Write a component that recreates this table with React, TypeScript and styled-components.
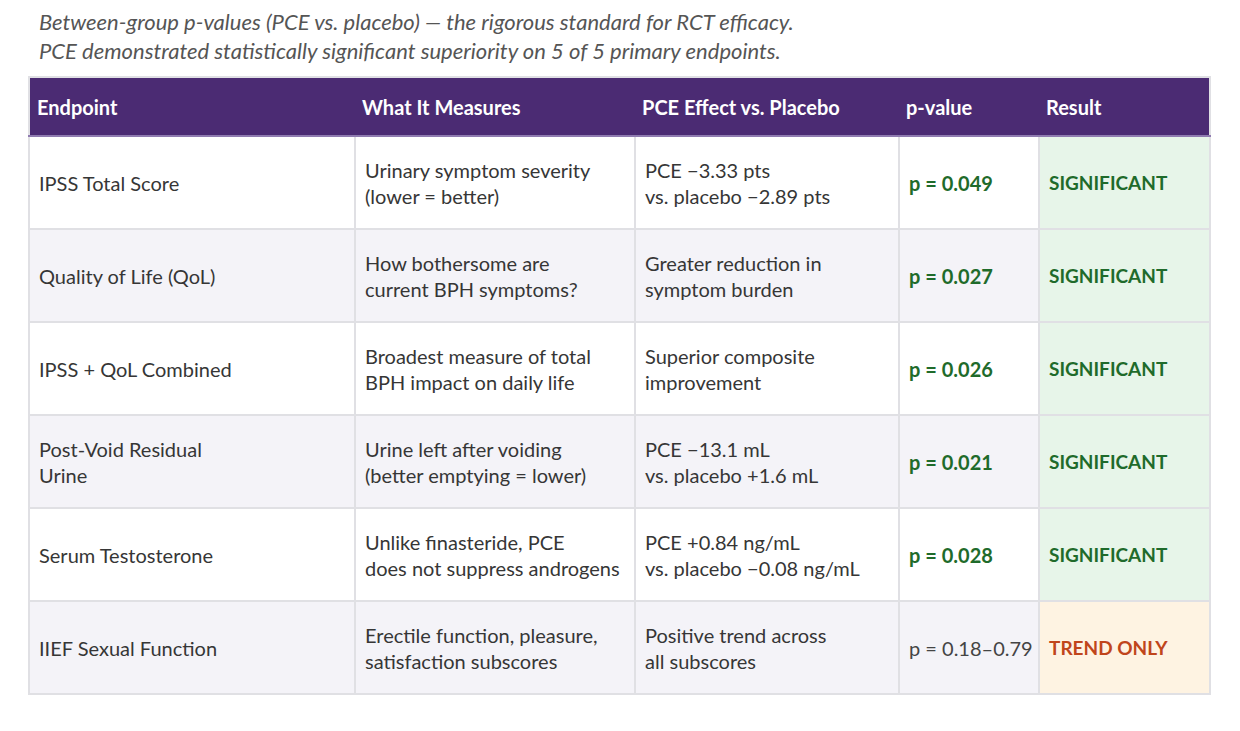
import React from 'react';
import styled, { createGlobalStyle } from 'styled-components';

const GlobalStyle = createGlobalStyle`
    body {
        margin: 0;
        background: #ffffff;
        font-family: Lato, "Open Sans", sans-serif;
        color: #363636;
    }
`;

type Tone = 'good' | 'trend';

interface Row {
    endpoint: string[];
    measures: string[];
    effect: string[];
    pValue: string;
    result: string;
    tone: Tone;
}

const rows: Row[] = [
    {
        endpoint: ['IPSS Total Score'],
        measures: ['Urinary symptom severity', '(lower = better)'],
        effect: ['PCE \u22123.33 pts', 'vs. placebo \u22122.89 pts'],
        pValue: 'p = 0.049',
        result: 'SIGNIFICANT',
        tone: 'good',
    },
    {
        endpoint: ['Quality of Life (QoL)'],
        measures: ['How bothersome are', 'current BPH symptoms?'],
        effect: ['Greater reduction in', 'symptom burden'],
        pValue: 'p = 0.027',
        result: 'SIGNIFICANT',
        tone: 'good',
    },
    {
        endpoint: ['IPSS + QoL Combined'],
        measures: ['Broadest measure of total', 'BPH impact on daily life'],
        effect: ['Superior composite', 'improvement'],
        pValue: 'p = 0.026',
        result: 'SIGNIFICANT',
        tone: 'good',
    },
    {
        endpoint: ['Post-Void Residual', 'Urine'],
        measures: ['Urine left after voiding', '(better emptying = lower)'],
        effect: ['PCE \u221213.1 mL', 'vs. placebo +1.6 mL'],
        pValue: 'p = 0.021',
        result: 'SIGNIFICANT',
        tone: 'good',
    },
    {
        endpoint: ['Serum Testosterone'],
        measures: ['Unlike finasteride, PCE', 'does not suppress androgens'],
        effect: ['PCE +0.84 ng/mL', 'vs. placebo \u22120.08 ng/mL'],
        pValue: 'p = 0.028',
        result: 'SIGNIFICANT',
        tone: 'good',
    },
    {
        endpoint: ['IIEF Sexual Function'],
        measures: ['Erectile function, pleasure,', 'satisfaction subscores'],
        effect: ['Positive trend across', 'all subscores'],
        pValue: 'p = 0.18\u20130.79',
        result: 'TREND ONLY',
        tone: 'trend',
    },
];

const Page = styled.div`
    padding: 7px 0 0 28px;
`;

const Caption = styled.p`
    margin: 0 0 11px 11px;
    font-style: italic;
    font-size: 22px;
    line-height: 29px;
    color: #555555;
`;

const Table = styled.table`
    border-collapse: collapse;
    table-layout: fixed;
    width: 1181px;
    border: 2px solid #e0e0e4;
`;

const HeadCell = styled.th`
    background: #4b2b73;
    color: #ffffff;
    font-weight: 700;
    font-size: 20px;
    text-align: left;
    height: 57px;
    padding: 0 7px;
    border-bottom: 2px solid #8f7bb0;
    white-space: nowrap;
`;

const BodyRow = styled.tr<{ $shaded: boolean }>`
    background: ${(p) => (p.$shaded ? '#f4f3f8' : '#ffffff')};
`;

const Cell = styled.td`
    height: 91px;
    padding: 0 4px 0 9px;
    font-size: 20px;
    line-height: 26px;
    vertical-align: middle;
    border: 2px solid #e0e0e4;
    white-space: nowrap;
`;

const PCell = styled(Cell)<{ $tone: Tone }>`
    font-weight: ${(p) => (p.$tone === 'good' ? 700 : 400)};
    color: ${(p) => (p.$tone === 'good' ? '#1f6b2b' : '#444444')};
`;

const ResultCell = styled(Cell)<{ $tone: Tone }>`
    font-size: 19px;
    font-weight: 700;
    background: ${(p) => (p.$tone === 'good' ? '#e7f5e9' : '#fef3e2')};
    color: ${(p) => (p.$tone === 'good' ? '#1f6b2b' : '#c0451b')};
`;

function Lines({ lines }: { lines: string[] }): JSX.Element {
    return (
        <>
            {lines.map((line, i) => (
                <div key={i}>{line}</div>
            ))}
        </>
    );
}

export default function App(): JSX.Element {
    return (
        <Page>
            <GlobalStyle />
            <Caption>
                Between-group p-values (PCE vs. placebo) — the rigorous standard for RCT efficacy.
                <br />
                PCE demonstrated statistically significant superiority on 5 of 5 primary endpoints.
            </Caption>
            <Table>
                <colgroup>
                    <col style={{ width: 326 }} />
                    <col style={{ width: 280 }} />
                    <col style={{ width: 264 }} />
                    <col style={{ width: 140 }} />
                    <col style={{ width: 171 }} />
                </colgroup>
                <thead>
                    <tr>
                        <HeadCell>Endpoint</HeadCell>
                        <HeadCell>What It Measures</HeadCell>
                        <HeadCell>PCE Effect vs. Placebo</HeadCell>
                        <HeadCell>p-value</HeadCell>
                        <HeadCell>Result</HeadCell>
                    </tr>
                </thead>
                <tbody>
                    {rows.map((row, i) => (
                        <BodyRow key={row.endpoint.join(' ')} $shaded={i % 2 === 1}>
                            <Cell><Lines lines={row.endpoint} /></Cell>
                            <Cell><Lines lines={row.measures} /></Cell>
                            <Cell><Lines lines={row.effect} /></Cell>
                            <PCell $tone={row.tone}>{row.pValue}</PCell>
                            <ResultCell $tone={row.tone}>{row.result}</ResultCell>
                        </BodyRow>
                    ))}
                </tbody>
            </Table>
        </Page>
    );
}
